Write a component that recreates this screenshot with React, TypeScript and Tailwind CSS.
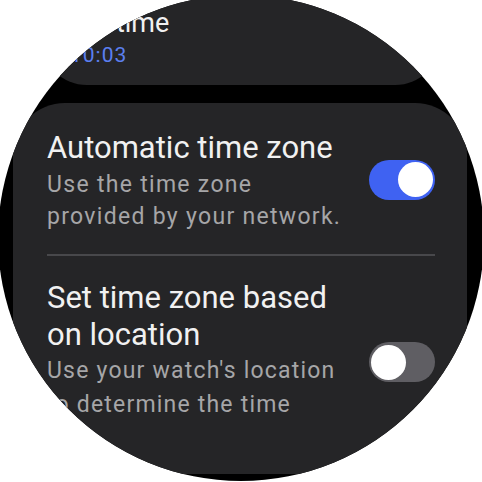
import React from "react";

function Toggle({ on, className = "" }: { on: boolean; className?: string }) {
  return (
    <div
      className={
        "flex h-[40px] w-[66px] shrink-0 items-center rounded-full px-[2px] " +
        (on ? "justify-end bg-[#3f62f2]" : "justify-start bg-[#5f5e63]") +
        " " +
        className
      }
    >
      <div className="h-[35px] w-[35px] rounded-full bg-white" />
    </div>
  );
}

export default function App() {
  return (
    <div
      className="h-[482px] w-[482px] overflow-hidden bg-white"
      style={{ fontFamily: "Roboto, 'Noto Sans', sans-serif" }}
    >
      <div className="-ml-[2px] -mt-[5px] h-[486px] w-[486px] overflow-hidden rounded-full bg-black">
        <div className="flex flex-col">
          {/* previous card (Set time), scaled down at the top edge */}
          <div className="ml-[43px] w-[400px] rounded-b-[46px] bg-[#252527] pb-[17px] pl-[29px] pt-[13px]">
            <div className="text-[27px] leading-[30px] text-[#f1f1f1]">Set time</div>
            <div className="mt-[4px] text-[21px] leading-[26px] tracking-[1px] text-[#5b7ff0]">10:03</div>
          </div>

          {/* time zone card */}
          <div className="ml-[15px] mt-[18px] h-[371px] w-[454px] rounded-[52px] bg-[#252527] pl-[34px] pr-[32px] pt-[26px]">
            <div className="flex items-center justify-between">
              <div className="w-[310px]">
                <div className="text-[31px] leading-[37px] text-[#f1f1f1]">Automatic time zone</div>
                <div className="mt-[3px] text-[23px] leading-[32px] tracking-[1.3px] text-[#a6a6a8]">
                  Use the time zone
                  <br />
                  provided by your network.
                </div>
              </div>
              <Toggle on={true} className="-mt-[3px]" />
            </div>

            <div className="mt-[21px] h-[1.5px] bg-[#48484b]" />

            <div className="mt-[23px] flex items-center justify-between">
              <div className="w-[310px]">
                <div className="text-[31px] leading-[37px] text-[#f1f1f1]">
                  Set time zone based
                  <br />
                  on location
                </div>
                <div className="mt-[1px] text-[23px] leading-[34px] tracking-[1.2px] text-[#a6a6a8]">
                  Use your watch's location
                  <br />
                  to determine the time
                </div>
              </div>
              <Toggle on={false} className="mt-[24px]" />
            </div>
          </div>
        </div>
      </div>
    </div>
  );
}
